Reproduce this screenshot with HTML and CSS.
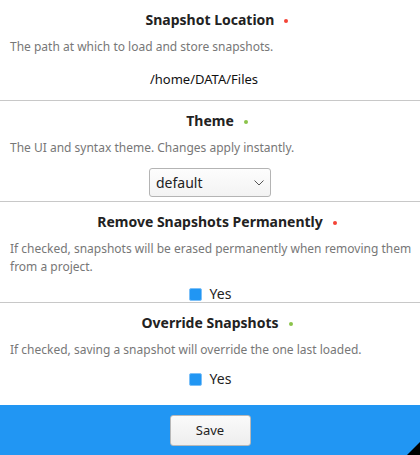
FILE: index.html
```html
<!DOCTYPE html>
<html>
<head>
<meta charset="utf-8">
<link rel="stylesheet" href="styles.css">
</head>
<body>
<div class="page">
  <div class="settings">
    <section class="setting fixed">
      <h2 class="title"><span class="label">Snapshot Location<span class="dot red"></span></span></h2>
      <p class="desc">The path at which to load and store snapshots.</p>
      <div class="control value">/home/DATA/Files</div>
    </section>
    <section class="setting fixed">
      <h2 class="title"><span class="label">Theme<span class="dot green"></span></span></h2>
      <p class="desc">The UI and syntax theme. Changes apply instantly.</p>
      <div class="control">
        <div class="select-wrap">
          <select class="select"><option>default</option></select>
          <svg class="chev" width="10" height="6" viewBox="0 0 10 6"><path d="M0.5 0.5 L5 5 L9.5 0.5" fill="none" stroke="#555" stroke-width="1"/></svg>
        </div>
      </div>
    </section>
    <section class="setting fixed">
      <h2 class="title"><span class="label">Remove Snapshots Permanently<span class="dot red"></span></span></h2>
      <p class="desc">If checked, snapshots will be erased permanently when removing them from a project.</p>
      <div class="control check-row tight"><span class="box"></span><span class="yes">Yes</span></div>
    </section>
    <section class="setting last">
      <h2 class="title"><span class="label">Override Snapshots<span class="dot green"></span></span></h2>
      <p class="desc">If checked, saving a snapshot will override the one last loaded.</p>
      <div class="control check-row"><span class="box"></span><span class="yes">Yes</span></div>
    </section>
  </div>
  <footer class="footer">
    <button class="save">Save</button>
  </footer>
  <div class="grip"></div>
</div>
</body>
</html>
```
FILE: styles.css
```css
html, body {
  margin: 0;
  padding: 0;
  background: #fff;
}
body {
  font-family: "Noto Sans", "Open Sans", sans-serif;
  color: #222;
}
.page {
  position: relative;
  width: 420px;
  height: 455px;
  display: flex;
  flex-direction: column;
  overflow: hidden;
}
.settings {
  flex: 1;
  display: flex;
  flex-direction: column;
}
.setting {
  padding: 9px 6px 0 10px;
  box-sizing: border-box;
}
.setting.fixed {
  height: 101px;
  border-bottom: 1px solid #c8c8c8;
  overflow: hidden;
}
.setting.last {
  flex: 1;
}
.title {
  margin: 0;
  font-size: 14px;
  font-weight: 700;
  line-height: 22px;
  text-align: center;
  color: #222;
  padding-right: 4px;
}
.label {
  position: relative;
}
.dot {
  position: absolute;
  right: -14px;
  top: 9px;
  width: 4px;
  height: 4px;
  border-radius: 50%;
}
.dot.red { background: #f44336; }
.dot.green { background: #8bc34a; }
.desc {
  margin: 7px 0 0;
  font-size: 12px;
  line-height: 18px;
  color: #777;
}
.control {
  margin-top: 12px;
  padding-right: 4px;
  display: flex;
  justify-content: center;
  align-items: center;
}
.value {
  font-size: 13px;
  line-height: 20px;
  color: #111;
  margin-top: 13px;
  padding-right: 16px;
}
.select-wrap {
  position: relative;
  width: 122px;
  height: 29px;
  margin-top: -1px;
}
.select {
  appearance: none;
  -webkit-appearance: none;
  width: 122px;
  height: 29px;
  margin: 0;
  padding: 0 6px;
  border: 1px solid #b4b4b4;
  border-radius: 3px;
  background: linear-gradient(#fdfdfd, #f3f3f3);
  font-family: "Noto Sans", "Open Sans", sans-serif;
  font-size: 14px;
  color: #222;
}
.chev {
  position: absolute;
  right: 7px;
  top: 12px;
  pointer-events: none;
}
.check-row {
  margin-top: 10px;
  height: 20px;
  gap: 8px;
}
.check-row.tight {
  margin-top: 8px;
}
.box {
  width: 11px;
  height: 11px;
  background: #2196f3;
  border: 1px solid #7cc0f8;
  border-radius: 2px;
}
.yes {
  font-size: 14px;
  line-height: 20px;
  color: #222;
}
.footer {
  height: 50px;
  background: #2196f3;
  display: flex;
  justify-content: center;
  align-items: center;
}
.save {
  width: 81px;
  height: 31px;
  border: 1px solid #b8b8b8;
  border-radius: 3px;
  background: linear-gradient(#fafafa, #eeeeee);
  font-family: "Noto Sans", "Open Sans", sans-serif;
  font-size: 13px;
  color: #222;
}
.grip {
  position: absolute;
  right: 0;
  bottom: 0;
  width: 13px;
  height: 13px;
  background: #000;
  clip-path: polygon(100% 0, 100% 100%, 0 100%);
}
```
